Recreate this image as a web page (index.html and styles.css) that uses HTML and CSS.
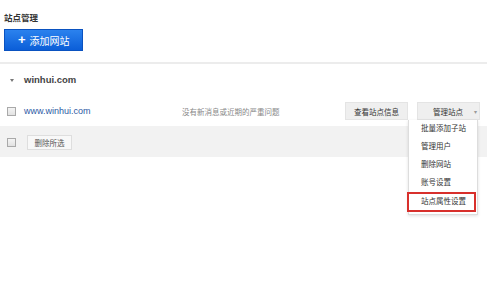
FILE: index.html
```html
<!DOCTYPE html>
<html>
<head>
<meta charset="utf-8">
<link rel="stylesheet" href="styles.css">
</head>
<body>
<div class="page">
  <div class="title">站点管理</div>
  <button class="add-btn"><span class="plus">+</span>添加网站</button>
  <div class="sep"></div>
  <div class="group-head"><span class="caret-down"></span><span class="domain">winhui.com</span></div>
  <div class="site-row">
    <span class="check"></span>
    <a class="site-link">www.winhui.com</a>
    <span class="msg">没有新消息或近期的严重问题</span>
    <button class="btn info-btn">查看站点信息</button>
    <div class="dd">
      <button class="btn manage-btn">管理站点<span class="dd-caret">▾</span></button>
      <ul class="menu">
        <li>批量添加子站</li>
        <li>管理用户</li>
        <li>删除网站</li>
        <li>账号设置</li>
        <li class="hl">站点属性设置</li>
      </ul>
    </div>
  </div>
  <div class="bulk-row">
    <span class="check"></span>
    <button class="del-btn">删除所选</button>
  </div>
</div>
</body>
</html>
```
FILE: styles.css
```css
* { box-sizing: border-box; }
html, body { margin: 0; padding: 0; background: #fff; }
body {
  width: 500px;
  height: 288px;
  overflow: hidden;
  font-family: "Liberation Sans", "Noto Sans CJK SC", sans-serif;
  color: #333;
}
.page { width: 487px; }
.title {
  padding: 13px 0 0 4px;
  height: 23px;
  line-height: 10px;
  font-size: 8.5px;
  font-weight: bold;
  color: #333;
}
.add-btn {
  display: flex;
  align-items: center;
  margin: 6px 0 0 4px;
  width: 79px;
  height: 22px;
  padding: 0 0 0 13px;
  border: 1px solid #0a52c0;
  background: linear-gradient(#2b82ee, #0b5ed8);
  color: #fff;
  font-family: "Liberation Sans", "Noto Sans CJK SC", sans-serif;
  font-size: 10px;
  cursor: pointer;
}
.plus {
  font-size: 13px;
  font-weight: bold;
  margin-right: 4px;
  line-height: 10px;
}
.sep {
  margin-top: 11px;
  height: 2px;
  background: #ececec;
}
.group-head {
  display: flex;
  align-items: center;
  height: 30px;
  padding-left: 10px;
}
.caret-down {
  width: 0; height: 0;
  border-left: 2.5px solid transparent;
  border-right: 2.5px solid transparent;
  border-top: 3px solid #777;
  margin-top: 2px;
}
.domain {
  margin-left: 10px;
  font-size: 9.5px;
  font-weight: bold;
  color: #444;
}
.site-row {
  display: flex;
  align-items: center;
  height: 32px;
  padding: 2px 7px 0 7px;
}
.check {
  flex: 0 0 9px;
  width: 9px;
  height: 9px;
  border: 1px solid #a9a9a9;
  background: linear-gradient(#f4f4f4, #e2e2e2);
}
.site-link {
  flex: 0 0 158px;
  margin-left: 8px;
  font-size: 9px;
  color: #2c59a4;
}
.msg {
  flex: 1;
  font-size: 7.5px;
  color: #888;
}
.btn {
  height: 18px;
  border: 1px solid #e4e4e4;
  background: #efefef;
  color: #333;
  font-family: "Liberation Sans", "Noto Sans CJK SC", sans-serif;
  font-size: 7.5px;
  padding: 0;
}
.info-btn { width: 63px; }
.dd { position: relative; margin-left: 9px; }
.manage-btn {
  width: 63px;
  display: flex;
  align-items: center;
  padding-left: 15px;
}
.dd-caret {
  margin-left: 11px;
  font-size: 6px;
  color: #999;
}
.menu {
  position: absolute;
  left: -9px;
  top: 100%;
  width: 70px;
  margin: 0;
  padding: 0 0 2px 0;
  list-style: none;
  background: #fff;
  border: 1px solid #ddd;
  border-top: none;
  box-shadow: 0 1px 3px rgba(0,0,0,0.12);
  z-index: 2;
}
.menu li {
  height: 18px;
  line-height: 18px;
  padding-left: 12px;
  font-size: 7.5px;
  color: #333;
}
.menu li.hl {
  height: 20px;
  line-height: 16px;
  width: 69px;
  margin-left: -2px;
  padding-left: 12px;
  border: 2px solid #d8302c;
}
.bulk-row {
  display: flex;
  align-items: center;
  height: 31px;
  padding: 2px 0 0 7px;
  background: #f2f2f2;
}
.del-btn {
  margin-left: 11px;
  width: 45px;
  height: 15px;
  padding: 0;
  border: 1px solid #dedede;
  background: #f8f8f8;
  color: #555;
  font-family: "Liberation Sans", "Noto Sans CJK SC", sans-serif;
  font-size: 7.5px;
}
```
